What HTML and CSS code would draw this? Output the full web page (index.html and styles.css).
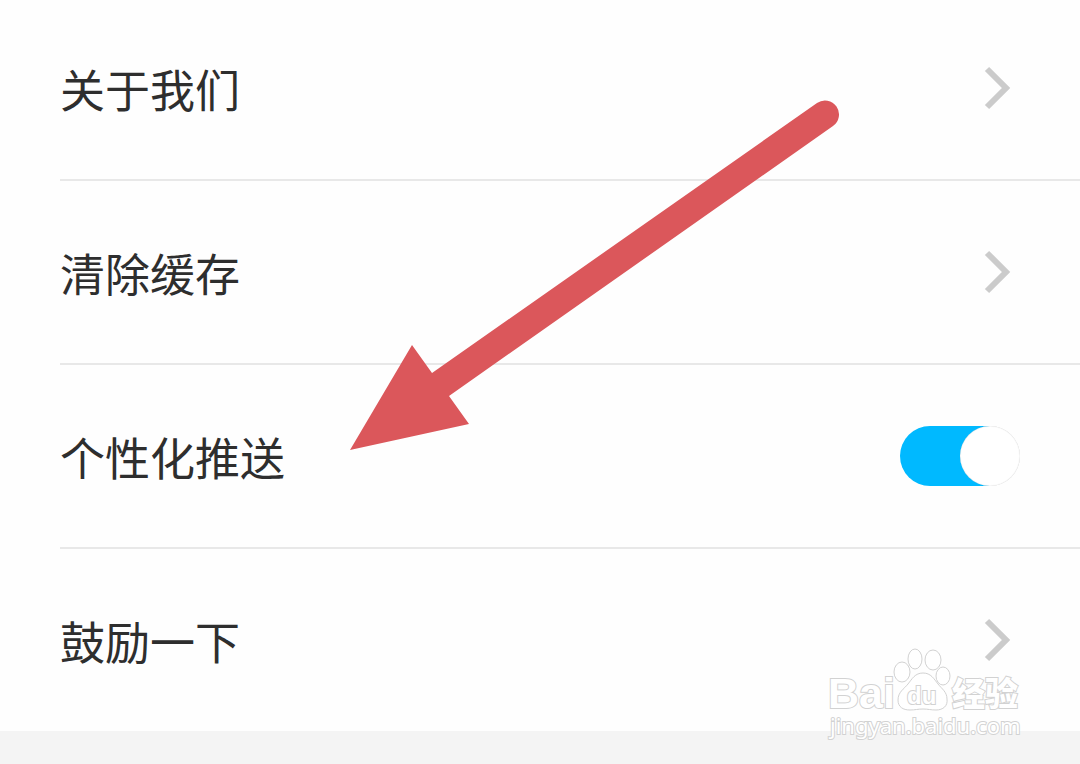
FILE: index.html
```
<!DOCTYPE html>
<html lang="zh-CN">
<head>
    <meta charset="UTF-8">
    <meta name="viewport" content="width=device-width, initial-scale=1.0">
    <title>设置</title>
    <link rel="stylesheet" href="styles.css">
</head>
<body>

<main class="settings">
    <a class="row" href="#about">
        <span class="row-title">关于我们</span>
        <svg class="chevron" viewBox="0 0 28 44" aria-hidden="true"><path d="M3 3 L22 22 L3 41"/></svg>
    </a>
    <a class="row" href="#cache">
        <span class="row-title">清除缓存</span>
        <svg class="chevron" viewBox="0 0 28 44" aria-hidden="true"><path d="M3 3 L22 22 L3 41"/></svg>
    </a>
    <div class="row">
        <label class="row-title" for="push">个性化推送</label>
        <input class="switch" type="checkbox" role="switch" id="push" checked>
    </div>
    <a class="row" href="#rate">
        <span class="row-title">鼓励一下</span>
        <svg class="chevron" viewBox="0 0 28 44" aria-hidden="true"><path d="M3 3 L22 22 L3 41"/></svg>
    </a>
</main>

<svg class="arrow" viewBox="0 0 490 352" aria-hidden="true">
    <path d="M0 350 L62 245 L82 273 L467 3 A14 14 0 0 1 483 26 L99 296 L119 324 Z"/>
</svg>

<svg class="watermark" viewBox="0 0 200 98" role="img" aria-label="Baidu 经验">
    <text class="mark-name" x="2" y="60">Bai</text>
    <ellipse cx="76" cy="24" rx="8" ry="10"/>
    <ellipse cx="89" cy="11" rx="7" ry="10"/>
    <ellipse cx="107" cy="12" rx="8" ry="10"/>
    <ellipse cx="117" cy="28" rx="7" ry="9"/>
    <path d="M97 25 C89 25 86 31 82 36 C78 41 72 44 72 52 C72 59 77 62 84 62 C89 62 92 61 97 61 C102 61 105 62 110 62 C117 62 122 58 121 51 C121 44 116 41 112 36 C108 31 105 25 97 25 Z"/>
    <text class="mark-du" x="81" y="56">du</text>
    <text class="mark-cn" x="126" y="58">经验</text>
    <text class="mark-url" x="4" y="86">jingyan.baidu.com</text>
</svg>

</body>
</html>
```
FILE: styles.css
```
* {
    box-sizing: border-box;
}
body {
    position: relative;
    min-height: 100vh;
    margin: 0;
    overflow-x: hidden;
    background-color: #f4f4f4;
    font-family: "Noto Sans CJK SC", sans-serif;
    color: #2e2e2e;
}
.settings {
    padding-left: 60px;
    background-color: #fefefe;
}
.row {
    display: flex;
    align-items: center;
    justify-content: space-between;
    height: 184px;
    padding-right: 60px;
    border-bottom: 2px solid #e8e8e8;
    color: inherit;
    text-decoration: none;
}
.row:first-child {
    height: 181px;
    padding-bottom: 3px;
}
.row:last-child {
    height: 182px;
    border-bottom: none;
}
.row-title {
    padding-top: 2px;
    font-size: 45px;
    line-height: 60px;
}
.chevron {
    width: 28px;
    height: 44px;
    margin-right: 8px;
    fill: none;
    stroke: #cbcbcb;
    stroke-width: 6;
}
.switch {
    appearance: none;
    display: flex;
    justify-content: flex-end;
    width: 120px;
    height: 60px;
    margin: 0;
    border-radius: 30px;
    background: linear-gradient(to right, #00b9ff 75%, #fff 75%);
    cursor: pointer;
}
.switch::before {
    content: "";
    width: 60px;
    height: 60px;
    border-radius: 50%;
    background-color: #fff;
    box-shadow: inset 0 0 1px #bbb;
}
.switch:not(:checked) {
    justify-content: flex-start;
    background: #ddd;
}
.arrow {
    position: absolute;
    top: 100px;
    left: 350px;
    width: 490px;
    height: 352px;
    fill: #db575b;
    pointer-events: none;
}
.watermark {
    position: absolute;
    top: 648px;
    right: 54px;
    width: 200px;
    height: 98px;
    overflow: visible;
    fill: #fff;
    stroke: #d2d2d2;
    stroke-width: 1;
    pointer-events: none;
}
.watermark text {
    paint-order: stroke;
    stroke-width: 2;
}
.mark-name {
    font: bold 43px "Liberation Sans", sans-serif;
}
.mark-du {
    font: bold 24px "Liberation Sans", sans-serif;
}
.mark-cn {
    font: 900 33px "Noto Sans CJK SC", sans-serif;
}
.mark-url {
    font: 22px "Noto Sans", sans-serif;
}
```
